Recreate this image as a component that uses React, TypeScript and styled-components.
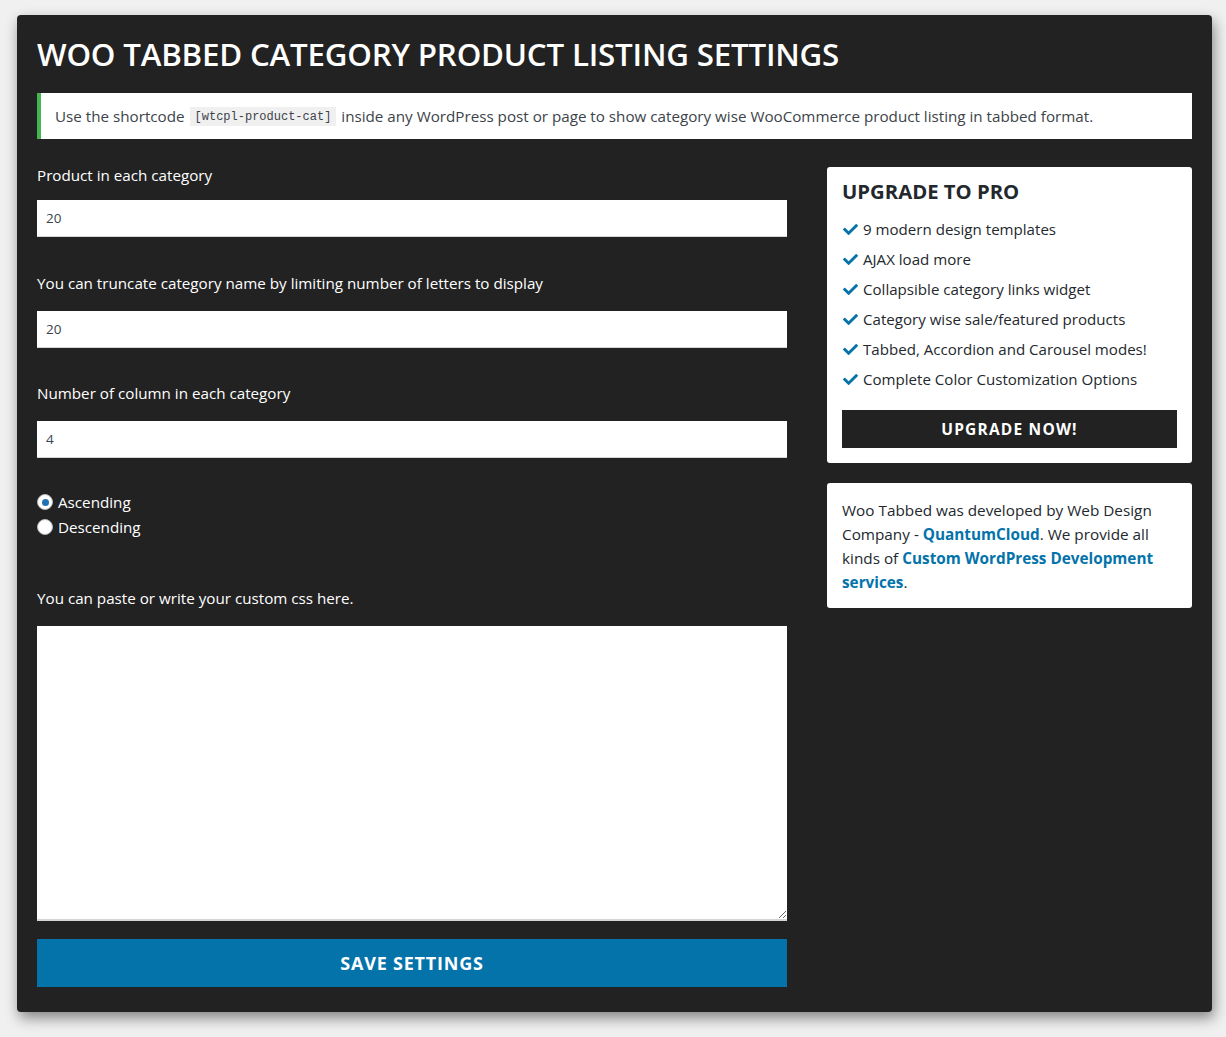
import { useState } from "react";
import styled, { createGlobalStyle } from "styled-components";
import { FaCheck } from "react-icons/fa";

const GlobalStyle = createGlobalStyle`
  html, body {
    margin: 0;
    padding: 0;
    background: #f0f0f0;
  }
  body {
    font-family: "Open Sans", "Noto Sans", sans-serif;
    color: #fff;
  }
  * {
    box-sizing: border-box;
  }
`;

const Page = styled.div`
  padding: 15px 14px 26px 17px;
`;

const Panel = styled.div`
  background: #222222;
  border-radius: 4px;
  padding: 20px 20px 25px;
  box-shadow: 2px 6px 14px rgba(0, 0, 0, 0.45);
`;

const Title = styled.h1`
  margin: 0 0 20px;
  font-size: 31.3px;
  line-height: 38px;
  font-weight: 600;
  color: #fff;
  letter-spacing: -0.2px;
`;

const Notice = styled.div`
  background: #fff;
  border-left: 4px solid #46b450;
  color: #3c434a;
  font-size: 15.2px;
  height: 46px;
  padding: 0 14px;
  display: flex;
  align-items: center;
  gap: 5px;
`;

const Code = styled.code`
  font-family: "Liberation Mono", "DejaVu Sans Mono", monospace;
  font-size: 12px;
  background: #f0f0f1;
  color: #3c434a;
  padding: 3px 5px 2px;
`;

const Columns = styled.div`
  display: grid;
  grid-template-columns: 750px 365px;
  gap: 40px;
  margin-top: 28px;
  align-items: start;
`;

const MainColumn = styled.div`
  display: flex;
  flex-direction: column;
`;

const Label = styled.label<{ $gap: number; $top?: number }>`
  display: block;
  font-size: 15.2px;
  line-height: 20px;
  margin-top: ${(p) => p.$top ?? 0}px;
  margin-bottom: ${(p) => p.$gap}px;
  color: #fff;
`;

const TextInput = styled.input`
  width: 100%;
  height: 37px;
  border: none;
  border-bottom: 1px solid #d5d5d5;
  background: #fff;
  padding: 0 9px;
  font-family: "Open Sans", sans-serif;
  font-size: 13.5px;
  color: #3c434a;
  outline: none;
`;

const RadioGroup = styled.div`
  display: flex;
  flex-direction: column;
  gap: 5px;
  margin-top: 34px;
`;

const RadioRow = styled.label`
  display: flex;
  align-items: center;
  gap: 5px;
  font-size: 15.2px;
  line-height: 20px;
  color: #fff;
  cursor: pointer;
`;

const RadioDot = styled.span<{ $checked: boolean }>`
  width: 16px;
  height: 16px;
  border-radius: 50%;
  background: #fff;
  border: 1px solid #b8b8b8;
  display: inline-flex;
  align-items: center;
  justify-content: center;
  flex-shrink: 0;

  &::after {
    content: "";
    width: 7px;
    height: 7px;
    border-radius: 50%;
    background: ${(p) => (p.$checked ? "#2271b1" : "transparent")};
  }
`;

const HiddenRadio = styled.input`
  display: none;
`;

const CssArea = styled.textarea`
  width: 100%;
  height: 295px;
  border: none;
  border-bottom: 2px solid #d5d5d5;
  background: #fff;
  display: block;
  resize: vertical;
  outline: none;
  font-family: "Liberation Mono", monospace;
  font-size: 13px;
`;

const SaveButton = styled.button`
  margin-top: 18px;
  height: 48px;
  width: 100%;
  border: none;
  background: #0473aa;
  color: #fff;
  font-family: "Open Sans", sans-serif;
  font-weight: 700;
  font-size: 18px;
  letter-spacing: 0.8px;
  cursor: pointer;
`;

const Sidebar = styled.div`
  display: flex;
  flex-direction: column;
  gap: 20px;
`;

const Card = styled.div<{ $pad: string }>`
  background: #fff;
  border-radius: 3px;
  padding: ${(p) => p.$pad};
  color: #23282d;
`;

const CardTitle = styled.h2`
  margin: 0 0 10px;
  font-size: 20.3px;
  line-height: 26px;
  font-weight: 700;
  color: #23282d;
`;

const FeatureList = styled.ul`
  list-style: none;
  margin: 0 0 16px;
  padding: 0;
`;

const Feature = styled.li`
  display: flex;
  align-items: center;
  gap: 5px;
  height: 30px;
  font-size: 15.1px;
  color: #23282d;

  svg {
    color: #0473aa;
    width: 15px;
    height: 15px;
    margin-left: 1px;
  }
`;

const UpgradeButton = styled.a`
  display: flex;
  align-items: center;
  justify-content: center;
  height: 38px;
  background: #222222;
  color: #fff;
  font-weight: 700;
  font-size: 15.5px;
  letter-spacing: 1.2px;
  text-decoration: none;
`;

const About = styled.p`
  margin: 0;
  font-size: 15.3px;
  line-height: 24px;
  color: #23282d;

  a {
    color: #0473aa;
    font-weight: 700;
    text-decoration: none;
  }
`;

const features = [
  "9 modern design templates",
  "AJAX load more",
  "Collapsible category links widget",
  "Category wise sale/featured products",
  "Tabbed, Accordion and Carousel modes!",
  "Complete Color Customization Options",
];

export default function App() {
  const [order, setOrder] = useState("ASC");

  return (
    <Page>
      <GlobalStyle />
      <Panel>
        <Title>WOO TABBED CATEGORY PRODUCT LISTING SETTINGS</Title>
        <Notice>
          Use the shortcode <Code>[wtcpl-product-cat]</Code> inside any
          WordPress post or page to show category wise WooCommerce product
          listing in tabbed format.
        </Notice>

        <Columns>
          <MainColumn>
            <Label $top={-2} $gap={15}>
              Product in each category
            </Label>
            <TextInput defaultValue="20" />

            <Label $top={36} $gap={18}>
              You can truncate category name by limiting number of letters to
              display
            </Label>
            <TextInput defaultValue="20" />

            <Label $top={35} $gap={18}>
              Number of column in each category
            </Label>
            <TextInput defaultValue="4" />

            <RadioGroup>
              {[
                { value: "ASC", text: "Ascending" },
                { value: "DESC", text: "Descending" },
              ].map((o) => (
                <RadioRow key={o.value}>
                  <HiddenRadio
                    type="radio"
                    name="order"
                    checked={order === o.value}
                    onChange={() => setOrder(o.value)}
                  />
                  <RadioDot $checked={order === o.value} />
                  {o.text}
                </RadioRow>
              ))}
            </RadioGroup>

            <Label $top={51} $gap={18}>
              You can paste or write your custom css here.
            </Label>
            <CssArea />

            <SaveButton>SAVE SETTINGS</SaveButton>
          </MainColumn>

          <Sidebar>
            <Card $pad="11px 15px 15px">
              <CardTitle>UPGRADE TO PRO</CardTitle>
              <FeatureList>
                {features.map((f) => (
                  <Feature key={f}>
                    <FaCheck />
                    {f}
                  </Feature>
                ))}
              </FeatureList>
              <UpgradeButton href="#">UPGRADE NOW!</UpgradeButton>
            </Card>

            <Card $pad="15px 15px 14px">
              <About>
                Woo Tabbed was developed by Web Design Company -{" "}
                <a href="#">QuantumCloud</a>. We provide all kinds of{" "}
                <a href="#">Custom WordPress Development services</a>.
              </About>
            </Card>
          </Sidebar>
        </Columns>
      </Panel>
    </Page>
  );
}
